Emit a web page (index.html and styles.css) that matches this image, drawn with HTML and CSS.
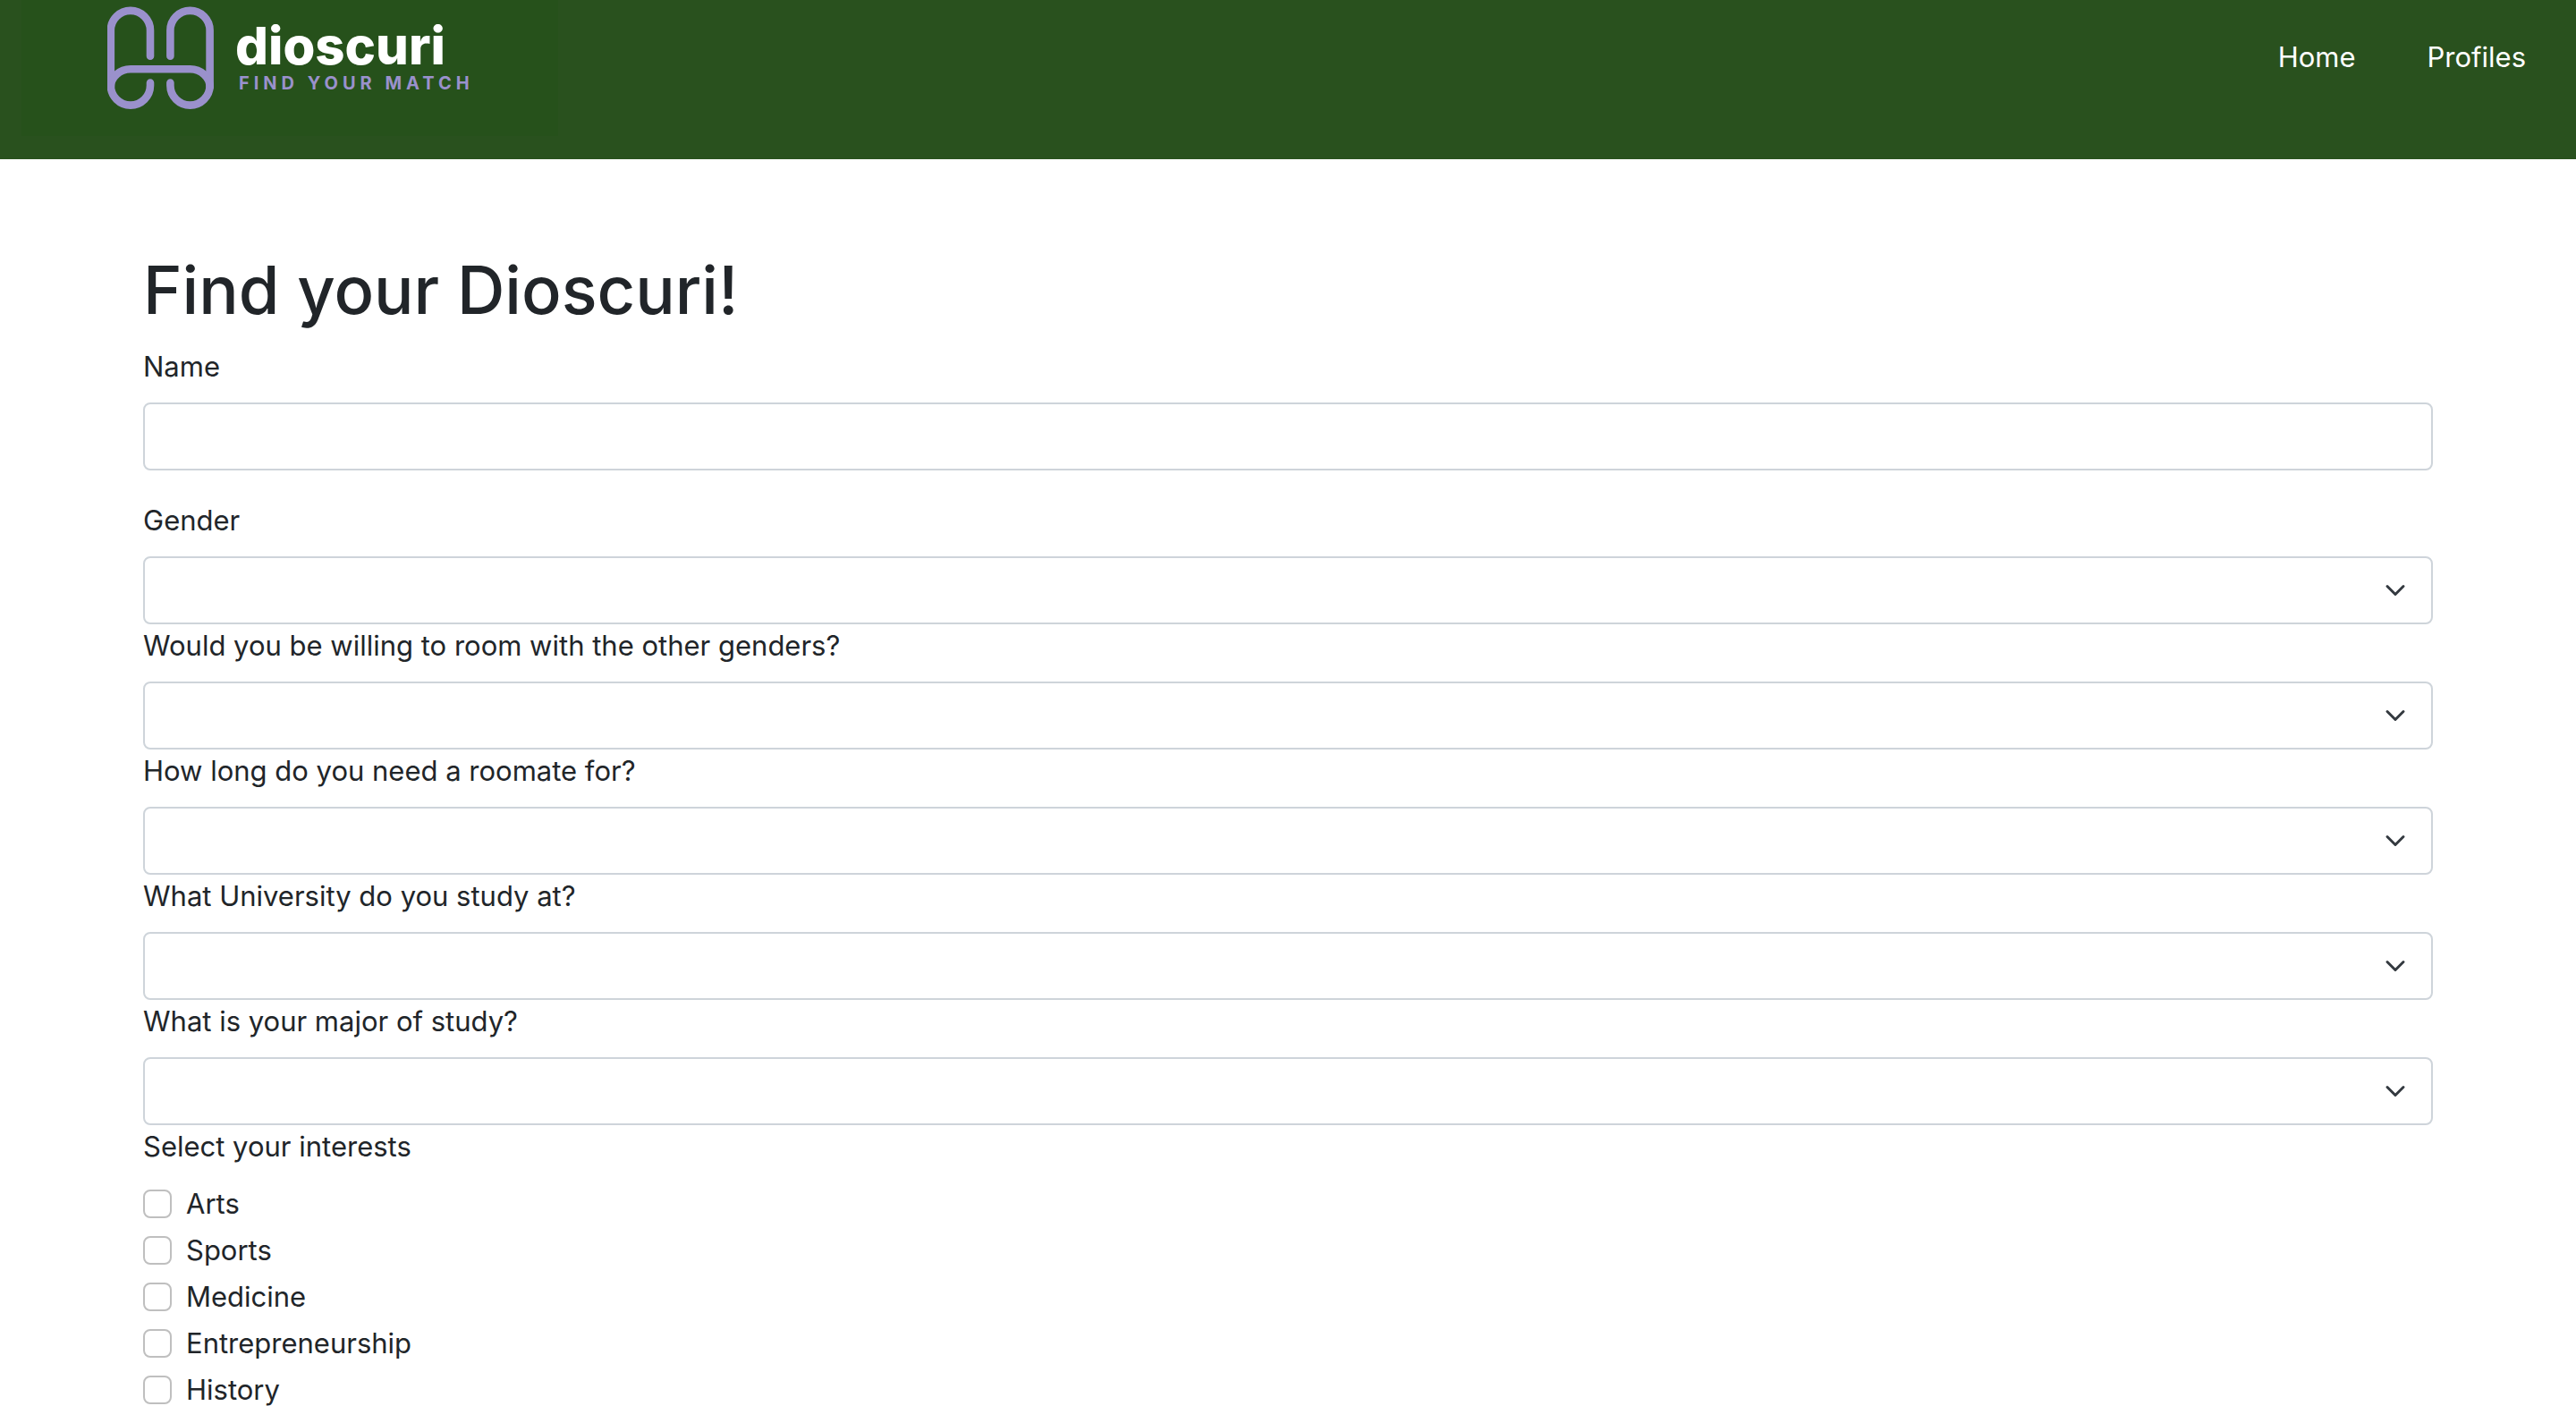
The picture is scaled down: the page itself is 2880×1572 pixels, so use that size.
FILE: index.html
```html
<!DOCTYPE html>
<html lang="en">
<head>
  <meta charset="utf-8">
  <meta name="viewport" content="width=device-width, initial-scale=1">
  <title>Dioscuri</title>
  <link rel="stylesheet" href="styles.css">
</head>
<body>
  <header class="site-header">
    <a class="brand" href="#">
      <svg class="brand-mark" viewBox="120 7 119 115" width="119" height="115" fill="none" stroke="#9a91cc" stroke-width="8.6" stroke-linecap="round" aria-hidden="true">
        <path d="M168 62.7V34a22.1 22.1 0 0 0-44.2 0v61.5a22.1 22.1 0 0 0 44.2 0v-3"/>
        <path d="M190.4 62.7V34a22.1 22.1 0 0 1 44.2 0v61.5a22.1 22.1 0 0 1-44.2 0v-3"/>
        <path d="M123.8 97.5A22.2 20.2 0 0 1 146 77.3h66.5a22.2 20.2 0 0 1 22.2 20.2"/>
      </svg>
      <span class="brand-text">
        <span class="brand-name">dioscuri</span>
        <span class="brand-tagline">FIND YOUR MATCH</span>
      </span>
    </a>
    <nav class="site-nav">
      <a class="nav-link" href="#">Home</a>
      <a class="nav-link" href="#">Profiles</a>
    </nav>
  </header>

  <main class="container">
    <h1 class="title">Find your Dioscuri!</h1>
    <form>
      <div class="field field-spaced">
        <label class="label" for="name">Name</label>
        <input class="control" type="text" id="name">
      </div>
      <div class="field">
        <label class="label" for="gender">Gender</label>
        <div class="select-wrap">
          <select class="control" id="gender"><option></option></select>
          <svg class="chevron" viewBox="0 0 16 16" aria-hidden="true"><path d="m2 5 6 6 6-6"/></svg>
        </div>
      </div>
      <div class="field">
        <label class="label" for="other">Would you be willing to room with the other genders?</label>
        <div class="select-wrap">
          <select class="control" id="other"><option></option></select>
          <svg class="chevron" viewBox="0 0 16 16" aria-hidden="true"><path d="m2 5 6 6 6-6"/></svg>
        </div>
      </div>
      <div class="field">
        <label class="label" for="duration">How long do you need a roomate for?</label>
        <div class="select-wrap">
          <select class="control" id="duration"><option></option></select>
          <svg class="chevron" viewBox="0 0 16 16" aria-hidden="true"><path d="m2 5 6 6 6-6"/></svg>
        </div>
      </div>
      <div class="field">
        <label class="label" for="university">What University do you study at?</label>
        <div class="select-wrap">
          <select class="control" id="university"><option></option></select>
          <svg class="chevron" viewBox="0 0 16 16" aria-hidden="true"><path d="m2 5 6 6 6-6"/></svg>
        </div>
      </div>
      <div class="field">
        <label class="label" for="major">What is your major of study?</label>
        <div class="select-wrap">
          <select class="control" id="major"><option></option></select>
          <svg class="chevron" viewBox="0 0 16 16" aria-hidden="true"><path d="m2 5 6 6 6-6"/></svg>
        </div>
      </div>
      <fieldset class="interests">
        <legend class="label">Select your interests</legend>
        <div class="check"><input type="checkbox" id="arts"><label for="arts">Arts</label></div>
        <div class="check"><input type="checkbox" id="sports"><label for="sports">Sports</label></div>
        <div class="check"><input type="checkbox" id="medicine"><label for="medicine">Medicine</label></div>
        <div class="check"><input type="checkbox" id="entrepreneurship"><label for="entrepreneurship">Entrepreneurship</label></div>
        <div class="check"><input type="checkbox" id="history"><label for="history">History</label></div>
      </fieldset>
    </form>
  </main>
</body>
</html>
```
FILE: styles.css
```css
* {
  box-sizing: border-box;
}

body {
  margin: 0;
  background: #fff;
  color: #212529;
  font: 400 31px/48px Inter, "Liberation Sans", sans-serif;
}

.site-header {
  display: flex;
  justify-content: space-between;
  align-items: flex-start;
  padding: 0 56px 26px 24px;
  background: #29511e;
}

.brand {
  display: flex;
  gap: 24px;
  min-width: 600px;
  padding: 7px 80px 30px 96px;
  background: #26511b;
  text-decoration: none;
}

.brand-mark {
  display: block;
}

.brand-text {
  display: flex;
  flex-direction: column;
  padding-top: 16px;
  font-weight: 700;
}

.brand-name {
  color: #fff;
  font-size: 58px;
  font-weight: 800;
  line-height: 56px;
}

.brand-tagline {
  padding-left: 4px;
  color: #9a91cc;
  font-size: 20px;
  line-height: 28px;
  letter-spacing: 5px;
}

.site-nav {
  display: flex;
  gap: 80px;
  padding-top: 40px;
}

.nav-link {
  color: #fff;
  text-decoration: none;
}

.container {
  padding: 96px 160px 0;
}

.title {
  margin: 0 0 12px;
  font-size: 74px;
  font-weight: 500;
  line-height: 100px;
}

.field-spaced {
  margin-bottom: 32px;
}

.label {
  display: block;
  width: fit-content;
  margin-bottom: 16px;
  padding: 0;
}

.control {
  display: block;
  width: 100%;
  height: 76px;
  padding: 12px 24px;
  border: 2px solid #ced4da;
  border-radius: 8px;
  background: #fff;
  color: inherit;
  font: inherit;
  appearance: none;
}

.select-wrap {
  position: relative;
}

.chevron {
  position: absolute;
  top: 26px;
  right: 30px;
  width: 24px;
  height: 24px;
  fill: none;
  stroke: #343a40;
  stroke-width: 2;
  stroke-linecap: round;
  stroke-linejoin: round;
  pointer-events: none;
}

.interests {
  min-width: 0;
  margin: 0;
  padding: 0;
  border: 0;
}

.check {
  display: flex;
  gap: 16px;
  margin-bottom: 4px;
}

.check input {
  width: 32px;
  height: 32px;
  margin: 8px 0 0;
  border: 2px solid #bfbfbf;
  border-radius: 8px;
  background: #fff;
  appearance: none;
}

.check input:checked {
  border-color: #0d6efd;
  background: #0d6efd;
}
```
